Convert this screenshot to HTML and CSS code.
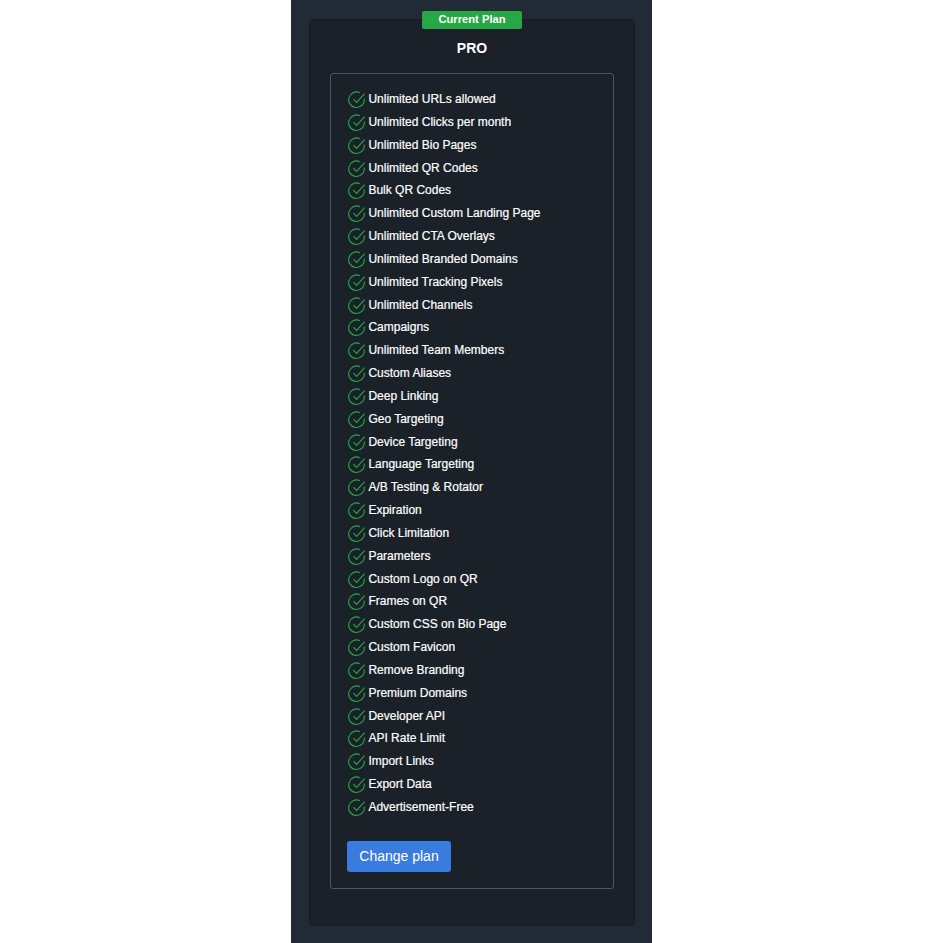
FILE: index.html
```html
<!DOCTYPE html>
<html lang="en">
<head>
    <meta charset="UTF-8">
    <title>Current Plan</title>
    <link rel="stylesheet" href="styles.css">
</head>
<body>
    <svg class="defs" width="0" height="0">
        <symbol id="check" viewBox="0 0 18 18">
            <path d="M16.2 7.6A7.8 7.8 0 1 1 11.8 1.7" />
            <path d="M5.4 8.2l3.2 3.2L16.6 2.6" />
        </symbol>
    </svg>
    <main class="panel">
        <section class="plan-card">
            <span class="badge">Current Plan</span>
            <h2 class="plan-name">PRO</h2>
            <div class="plan-box">
                <ul class="features">
                    <li><svg class="icon"><use href="#check" /></svg>Unlimited URLs allowed</li>
                    <li><svg class="icon"><use href="#check" /></svg>Unlimited Clicks per month</li>
                    <li><svg class="icon"><use href="#check" /></svg>Unlimited Bio Pages</li>
                    <li><svg class="icon"><use href="#check" /></svg>Unlimited QR Codes</li>
                    <li><svg class="icon"><use href="#check" /></svg>Bulk QR Codes</li>
                    <li><svg class="icon"><use href="#check" /></svg>Unlimited Custom Landing Page</li>
                    <li><svg class="icon"><use href="#check" /></svg>Unlimited CTA Overlays</li>
                    <li><svg class="icon"><use href="#check" /></svg>Unlimited Branded Domains</li>
                    <li><svg class="icon"><use href="#check" /></svg>Unlimited Tracking Pixels</li>
                    <li><svg class="icon"><use href="#check" /></svg>Unlimited Channels</li>
                    <li><svg class="icon"><use href="#check" /></svg>Campaigns</li>
                    <li><svg class="icon"><use href="#check" /></svg>Unlimited Team Members</li>
                    <li><svg class="icon"><use href="#check" /></svg>Custom Aliases</li>
                    <li><svg class="icon"><use href="#check" /></svg>Deep Linking</li>
                    <li><svg class="icon"><use href="#check" /></svg>Geo Targeting</li>
                    <li><svg class="icon"><use href="#check" /></svg>Device Targeting</li>
                    <li><svg class="icon"><use href="#check" /></svg>Language Targeting</li>
                    <li><svg class="icon"><use href="#check" /></svg>A/B Testing &amp; Rotator</li>
                    <li><svg class="icon"><use href="#check" /></svg>Expiration</li>
                    <li><svg class="icon"><use href="#check" /></svg>Click Limitation</li>
                    <li><svg class="icon"><use href="#check" /></svg>Parameters</li>
                    <li><svg class="icon"><use href="#check" /></svg>Custom Logo on QR</li>
                    <li><svg class="icon"><use href="#check" /></svg>Frames on QR</li>
                    <li><svg class="icon"><use href="#check" /></svg>Custom CSS on Bio Page</li>
                    <li><svg class="icon"><use href="#check" /></svg>Custom Favicon</li>
                    <li><svg class="icon"><use href="#check" /></svg>Remove Branding</li>
                    <li><svg class="icon"><use href="#check" /></svg>Premium Domains</li>
                    <li><svg class="icon"><use href="#check" /></svg>Developer API</li>
                    <li><svg class="icon"><use href="#check" /></svg>API Rate Limit</li>
                    <li><svg class="icon"><use href="#check" /></svg>Import Links</li>
                    <li><svg class="icon"><use href="#check" /></svg>Export Data</li>
                    <li><svg class="icon"><use href="#check" /></svg>Advertisement-Free</li>
                </ul>
                <button class="btn-change">Change plan</button>
            </div>
        </section>
    </main>
</body>
</html>
```

FILE: styles.css
```css
html, body {
    margin: 0;
    padding: 0;
    background-color: #fff;
    font-family: "Liberation Sans", Arial, sans-serif;
}

.defs {
    display: block;
    height: 0;
}

.panel {
    box-sizing: border-box;
    width: 361px;
    height: 943px;
    margin-left: 291px;
    padding: 19px 17px 0 18px;
    background-color: #212a35;
}

.plan-card {
    position: relative;
    box-sizing: border-box;
    height: 907px;
    padding: 0 20px;
    background-color: #1a2128;
    border: 1px solid #171c22;
    border-radius: 4px;
}

.badge {
    position: absolute;
    top: -9px;
    left: 112px;
    width: 100px;
    height: 18px;
    line-height: 17px;
    text-align: center;
    font-size: 11.2px;
    font-weight: 700;
    color: #fff;
    background-color: #28a745;
    border-radius: 2px;
}

.plan-name {
    margin: 0;
    padding-top: 20px;
    height: 33px;
    line-height: 16px;
    text-align: center;
    font-size: 14px;
    font-weight: 700;
    color: #fff;
}

.plan-box {
    box-sizing: border-box;
    height: 816px;
    padding: 13.75px 16px 0;
    border: 1px solid #4a5666;
    border-radius: 3px;
}

.features {
    list-style: none;
    margin: 0 0 23px;
    padding: 0;
}

.features li {
    display: flex;
    align-items: center;
    gap: 2.4px;
    height: 22.84px;
    font-size: 12px;
    color: #fff;
    -webkit-text-stroke: 0.2px #fff;
}

.icon {
    flex: none;
    width: 18px;
    height: 18px;
    margin: 2px 0 0 1px;
    fill: none;
    stroke: #28a745;
    stroke-width: 1.1;
}

.btn-change {
    display: block;
    width: 104px;
    height: 31px;
    padding: 0 0 2px;
    border: 0;
    border-radius: 3px;
    background-color: #3a7be0;
    color: #fff;
    font-family: inherit;
    font-size: 14px;
}
```
